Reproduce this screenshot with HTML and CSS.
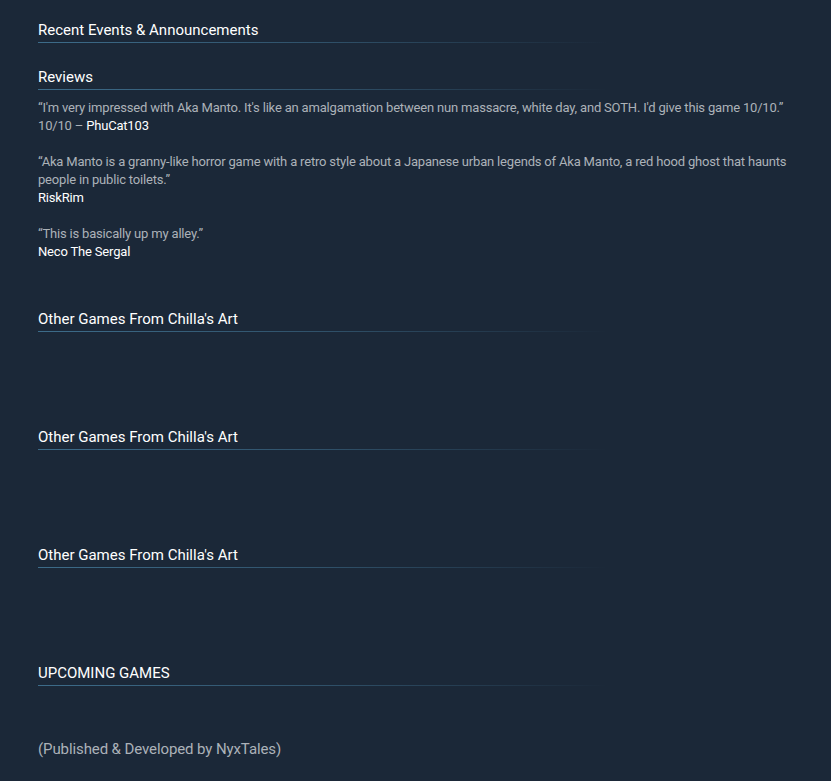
FILE: index.html
```html
<!DOCTYPE html>
<html lang="en">
<head>
<meta charset="utf-8">
<title>Aka Manto</title>
<link rel="stylesheet" href="styles.css">
</head>
<body>
<div class="page">
  <h2 class="sec-title">Recent Events &amp; Announcements</h2>
  <h2 class="sec-title sec-reviews">Reviews</h2>
  <div class="reviews">
    <p class="review">“I'm very impressed with Aka Manto. It's like an amalgamation between nun massacre, white day, and SOTH. I'd give this game 10/10.”<br>10/10 – <span class="author">PhuCat103</span></p>
    <p class="review">“Aka Manto is a granny-like horror game with a retro style about a Japanese urban legends of Aka Manto, a red hood ghost that haunts people in public toilets.”<br><span class="author">RiskRim</span></p>
    <p class="review">“This is basically up my alley.”<br><span class="author">Neco The Sergal</span></p>
  </div>
  <h2 class="sec-title sec-gap">Other Games From Chilla's Art</h2>
  <h2 class="sec-title sec-gap-lg">Other Games From Chilla's Art</h2>
  <h2 class="sec-title sec-gap-lg">Other Games From Chilla's Art</h2>
  <h2 class="sec-title sec-gap-lg upcoming">UPCOMING GAMES</h2>
  <p class="publisher">(Published &amp; Developed by NyxTales)</p>
</div>
</body>
</html>
```
FILE: styles.css
```css
html, body {
  margin: 0;
  padding: 0;
  background: #1b2838;
}
body {
  font-family: Roboto, "Liberation Sans", Arial, sans-serif;
  color: #acb2b8;
  min-height: 781px;
}
.page {
  padding: 21px 0 0 38px;
}
.sec-title {
  margin: 0;
  width: 570px;
  font-size: 15px;
  line-height: 18px;
  font-weight: 400;
  color: #ffffff;
  padding-bottom: 4px;
  background-image: linear-gradient(to right, #3d6c8a 0%, rgba(61,108,138,0.6) 50%, rgba(61,108,138,0) 100%);
  background-repeat: no-repeat;
  background-position: left bottom;
  background-size: 100% 1px;
}
.sec-reviews {
  margin-top: 25px;
}
.reviews {
  margin-top: 9px;
  max-width: 762px;
  font-size: 13px;
  line-height: 18px;
  letter-spacing: -0.18px;
}
.review {
  margin: 0 0 18px 0;
}
.review:last-child {
  margin-bottom: 0;
}
.author {
  color: #ffffff;
}
.sec-gap {
  margin-top: 49px;
}
.sec-gap-lg {
  margin-top: 96px;
}
.publisher {
  margin: 53px 0 0 0;
  font-size: 15px;
  line-height: 20px;
  letter-spacing: -0.1px;
}
```
